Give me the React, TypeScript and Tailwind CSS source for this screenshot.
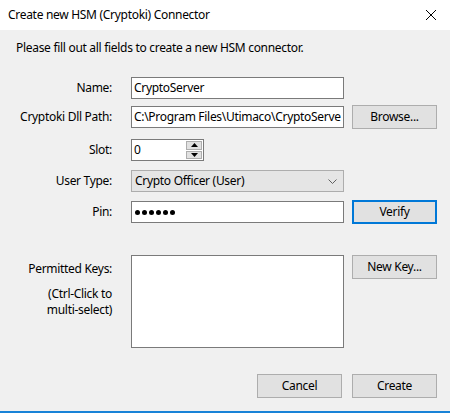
import React from "react";

/* Win10-style dialog: Create new HSM (Cryptoki) Connector */

const FONT = "font-['Segoe_UI','Noto_Sans',sans-serif] tracking-[-0.3px]";

const Button = ({
  label,
  focused = false,
}: {
  label: string;
  focused?: boolean;
}) => (
  <div
    className={
      "w-[85px] h-[24px] flex items-center justify-center bg-[#e1e1e1] text-[12px] text-black " +
      (focused ? "border-2 border-[#0078d7]" : "border border-[#adadad]")
    }
  >
    {label}
  </div>
);

const Label = ({ children }: { children: React.ReactNode }) => (
  <div className="w-[96px] text-right text-[12px] leading-[16px] text-black whitespace-nowrap">
    {children}
  </div>
);

const TextBox = ({ value }: { value?: string }) => (
  <div className="w-[213px] h-[22px] bg-white border border-[#7a7a7a] px-[2px] flex items-center text-[12px] text-black overflow-hidden whitespace-nowrap">
    {value}
  </div>
);

export default function App() {
  return (
    <div className={`w-[450px] h-[413px] flex flex-col bg-white ${FONT}`}>
      {/* Title bar */}
      <div className="h-[30px] bg-white flex items-center justify-between pl-[8px] pr-[10px]">
        <span className="text-[12px] text-black">
          Create new HSM (Cryptoki) Connector
        </span>
        <svg width="12" height="12" viewBox="0 0 12 12" className="mr-[3px]">
          <path d="M1 1L11 11M11 1L1 11" stroke="#000" strokeWidth="1" />
        </svg>
      </div>

      {/* Body */}
      <div className="flex-1 bg-[#f0f0f0] border-b-2 border-[#1883d7] pl-[16px] flex flex-col">
        <p className="mt-[10px] text-[12px] leading-[16px] text-black">
          Please fill out all fields to create a new HSM connector.
        </p>

        {/* Name */}
        <div className="mt-[21px] h-[22px] flex items-center gap-[19px]">
          <Label>Name:</Label>
          <TextBox value="CryptoServer" />
        </div>

        {/* Path */}
        <div className="mt-[6px] h-[24px] flex items-center gap-[19px]">
          <Label>Cryptoki Dll Path:</Label>
          <div className="flex items-center gap-[8px]">
            <TextBox value="C:\Program Files\Utimaco\CryptoServe" />
            <Button label="Browse..." />
          </div>
        </div>

        {/* Slot */}
        <div className="mt-[10px] h-[22px] flex items-center gap-[19px]">
          <Label>Slot:</Label>
          <div className="w-[73px] h-[22px] bg-white border border-[#7a7a7a] flex items-center">
            <span className="flex-1 pl-[2px] text-[12px] text-black">0</span>
            <div className="w-[16px] h-[18px] mr-[1px] flex flex-col gap-[1px]">
              <div className="flex-1 bg-[#e1e1e1] border border-[#adadad] flex items-center justify-center">
                <svg width="7" height="4" viewBox="0 0 7 4">
                  <path d="M3.5 0L7 4H0Z" fill="#000" />
                </svg>
              </div>
              <div className="flex-1 bg-[#e1e1e1] border border-[#adadad] flex items-center justify-center">
                <svg width="7" height="4" viewBox="0 0 7 4">
                  <path d="M0 0H7L3.5 4Z" fill="#000" />
                </svg>
              </div>
            </div>
          </div>
        </div>

        {/* User type */}
        <div className="mt-[9px] h-[22px] flex items-center gap-[19px]">
          <Label>User Type:</Label>
          <div className="w-[213px] h-[22px] bg-[#e5e5e5] border border-[#adadad] pl-[3px] pr-[6px] flex items-center justify-between text-[12px] text-black">
            <span>Crypto Officer (User)</span>
            <svg width="9" height="5" viewBox="0 0 9 5">
              <path d="M0.5 0.5L4.5 4.5L8.5 0.5" stroke="#606060" fill="none" />
            </svg>
          </div>
        </div>

        {/* Pin */}
        <div className="mt-[8px] h-[24px] flex items-center gap-[19px]">
          <Label>Pin:</Label>
          <div className="flex items-center gap-[8px]">
            <div className="w-[213px] h-[22px] bg-white border border-[#7a7a7a] pl-[3px] flex items-center gap-[2px]">
              {Array.from({ length: 6 }).map((_, i) => (
                <span key={i} className="w-[5px] h-[5px] rounded-full bg-black" />
              ))}
            </div>
            <Button label="Verify" focused />
          </div>
        </div>

        {/* Permitted keys */}
        <div className="mt-[31px] flex items-start gap-[19px]">
          <div className="w-[96px] text-right text-[12px] leading-[16px] text-black pt-[6px]">
            <div className="whitespace-nowrap">Permitted Keys:</div>
            <div className="mt-[9px]">(Ctrl-Click to</div>
            <div>multi-select)</div>
          </div>
          <div className="flex items-start gap-[8px]">
            <div className="w-[213px] h-[93px] bg-white border border-[#7a7a7a]" />
            <Button label="New Key..." />
          </div>
        </div>

        {/* Footer */}
        <div className="mt-[26px] flex justify-end gap-[10px] pr-[13px]">
          <Button label="Cancel" />
          <Button label="Create" />
        </div>
      </div>
    </div>
  );
}
